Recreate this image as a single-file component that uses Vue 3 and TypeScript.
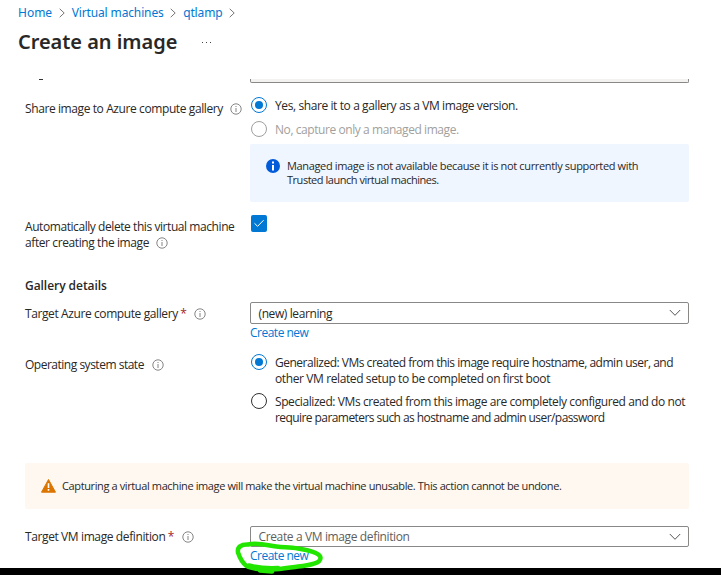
<script setup lang="ts">
import { ref } from 'vue'

const crumbs = [
  { text: 'Home', cls: 'c-home' },
  { text: 'Virtual machines', cls: 'c-vm' },
  { text: 'qtlamp', cls: 'c-name' },
]
const share = ref('gallery')
const osState = ref('generalized')
const autoDelete = ref(true)
</script>

<template>
  <div class="page">
    <header class="header">
      <nav class="crumbs">
        <template v-for="c in crumbs" :key="c.text">
          <a :class="c.cls">{{ c.text }}</a>
          <svg class="sep" width="6" height="10" viewBox="0 0 6 10"><path d="M.7 .8 5.2 5 .7 9.2" /></svg>
        </template>
      </nav>
      <div class="title-row">
        <h1>Create an image</h1>
        <span class="dots"><i></i><i></i><i></i></span>
      </div>
    </header>

    <main class="form">
      <div class="clipped"><span class="descender"></span><span class="clipped-field"></span></div>

      <section class="row share">
        <div class="label"><span class="t-share">Share image to Azure compute gallery</span>
          <svg class="info" viewBox="0 0 12 12"><circle cx="6" cy="6" r="5.2" /><path d="M6 5v4M6 3v1" /></svg>
        </div>
        <div class="options">
          <div class="option" @click="share = 'gallery'">
            <span class="radio" :class="{ on: share === 'gallery' }"></span>
            <span class="t-yes">Yes, share it to a gallery as a VM image version.</span>
          </div>
          <div class="option disabled">
            <span class="radio"></span>
            <span class="t-no">No, capture only a managed image.</span>
          </div>
          <div class="notice">
            <svg width="14" height="14" viewBox="0 0 14 14"><circle cx="7" cy="7" r="7" fill="#015cda" /><path d="M6 6h2v5.5H6zM6 2.6h2v2H6z" fill="#fff" /></svg>
            <p><span class="t-n1">Managed image is not available because it is not currently supported with</span><br><span class="t-n2">Trusted launch virtual machines.</span></p>
          </div>
        </div>
      </section>

      <section class="row delete">
        <div class="label two"><span class="t-d1">Automatically delete this virtual machine</span><br><span class="t-d2">after creating the image</span>
          <svg class="info" viewBox="0 0 12 12"><circle cx="6" cy="6" r="5.2" /><path d="M6 5v4M6 3v1" /></svg>
        </div>
        <div class="check" @click="autoDelete = !autoDelete">
          <svg v-if="autoDelete" width="16" height="17" viewBox="0 0 16 17"><path d="M3.5 8.3 6.6 11.3 12.6 5.2" /></svg>
        </div>
      </section>

      <h2>Gallery details</h2>

      <section class="row gallery">
        <div class="label"><span class="t-target">Target Azure compute gallery</span><b class="req">*</b>
          <svg class="info" viewBox="0 0 12 12"><circle cx="6" cy="6" r="5.2" /><path d="M6 5v4M6 3v1" /></svg>
        </div>
        <div>
          <div class="select"><span class="t-learn">(new) learning</span>
            <svg width="12" height="8" viewBox="0 0 12 8"><path d="M.8 1 6 6.3 11.2 1" /></svg>
          </div>
          <a class="create">Create new</a>
        </div>
      </section>

      <section class="row os">
        <div class="label"><span class="t-os">Operating system state</span>
          <svg class="info" viewBox="0 0 12 12"><circle cx="6" cy="6" r="5.2" /><path d="M6 5v4M6 3v1" /></svg>
        </div>
        <div class="options">
          <div class="option" @click="osState = 'generalized'">
            <span class="radio" :class="{ on: osState === 'generalized' }"></span>
            <span><span class="t-g1">Generalized: VMs created from this image require hostname, admin user, and</span><br><span class="t-g2">other VM related setup to be completed on first boot</span></span>
          </div>
          <div class="option" @click="osState = 'specialized'">
            <span class="radio" :class="{ on: osState === 'specialized' }"></span>
            <span><span class="t-s1">Specialized: VMs created from this image are completely configured and do not</span><br><span class="t-s2">require parameters such as hostname and admin user/password</span></span>
          </div>
        </div>
      </section>

      <div class="warning">
        <svg width="15" height="14" viewBox="0 0 15 14"><path d="M7.5 .5 14.5 13.2H.5z" fill="#db7500" stroke="#db7500" stroke-linejoin="round" /><path d="M6.7 4.3h1.6v4.6H6.7zM6.7 10.1h1.6v1.6H6.7z" fill="#fff" /></svg>
        <span class="t-w">Capturing a virtual machine image will make the virtual machine unusable. This action cannot be undone.</span>
      </div>

      <section class="row definition">
        <div class="label"><span class="t-def">Target VM image definition</span><b class="req">*</b>
          <svg class="info" viewBox="0 0 12 12"><circle cx="6" cy="6" r="5.2" /><path d="M6 5v4M6 3v1" /></svg>
        </div>
        <div>
          <div class="select placeholder"><span class="t-ph">Create a VM image definition</span>
            <svg width="12" height="8" viewBox="0 0 12 8"><path d="M.8 1 6 6.3 11.2 1" /></svg>
          </div>
          <a class="create">Create new</a>
        </div>
      </section>
    </main>

    <footer class="bar"></footer>

    <svg class="marker" width="100" height="40" viewBox="0 0 100 40">
      <path d="M14 9.5C19 8.300 28 9 36 10.500 45 12.500 54 12 64 13.500 74 15 86 18 86.500 22.500 87 28 76 30.500 64 31.500 56 32.500 46 34.500 38 34.500 27 34.500 17 34 12.500 31 8 27.500 5.500 22 4 17.500 3 12 7 9.300 14 9.500" />
      <path d="M15 30.500C24 33 32 33.500 44 33" />
      <path d="M26 35.500 38 36.500" />
    </svg>
  </div>
</template>

<style>
body { margin: 0; background: #fff; }
</style>

<style scoped>
.page {
  position: relative;
  width: 721px;
  height: 575px;
  overflow: hidden;
  background: #fff;
  color: #292827;
  font: 12px/16px "Open Sans", "Noto Sans", sans-serif;
  letter-spacing: -.4px;
  white-space: nowrap;
  display: flex;
  flex-direction: column;
}
.page * { box-sizing: border-box; }
a { color: #0078d4; }
.header { height: 79px; flex: none; padding-left: 18px; }
.crumbs { display: flex; align-items: center; height: 26px; font-family: "Noto Sans", sans-serif; font-size: 12px; letter-spacing: -.13px; }
.c-home { letter-spacing: 0; }
.sep { margin: 0 7px 0 6.5px; fill: none; stroke: #777; }
.title-row { display: flex; align-items: center; height: 31px; }
h1 { margin: 0; font-family: "Noto Sans", sans-serif; font-size: 20px; line-height: 28px; font-weight: 600; letter-spacing: -.04px; width: 184px; }
.dots { display: flex; gap: 3px; padding-top: 1px; }
.dots i { width: 1px; height: 1px; background: #444; }
.form { flex: none; height: 489px; width: 689px; padding-left: 25px; }
.clipped { display: grid; grid-template-columns: 225px 439px; height: 4px; }
.descender { width: 4px; height: 1px; margin-left: 14px; background: #333; }
.clipped-field { border: 1px solid #8a8886; border-top: 0; border-radius: 0 0 2px 2px; background: #f3f2f1; }
.row { display: grid; grid-template-columns: 225px 439px; }
.label { display: flex; align-items: center; height: 16px; }
.label.two { display: block; height: 32px; }
.info { width: 12px; height: 12px; flex: none; margin-left: 7.5px; fill: none; stroke: #777; stroke-width: .9; }
.two .info { margin-left: 7px; vertical-align: -2px; }
.os .info { margin-left: 8.5px; }
.req { color: #a4262c; font-weight: 400; margin-left: 2.5px; width: 6px; }
.req + .info { margin-left: 8px; }
.option { display: flex; align-items: flex-start; gap: 8px; }
.radio { width: 16px; height: 16px; flex: none; margin-left: 1px; border: 1px solid #323130; border-radius: 50%; display: grid; place-items: center; }
.radio.on { border-color: #0078d4; }
.radio.on::after { content: ""; width: 8px; height: 8px; border-radius: 50%; background: #0078d4; }
.disabled { color: #a19f9d; }
.disabled .radio { border-color: #a19f9d; }
.share { margin-top: 14px; }
.share .label { margin-top: 4px; }
.t-share, .t-yes { letter-spacing: -.4px; }
.t-no { letter-spacing: -.43px; }
.share .option { height: 16px; }
.share .option + .option { margin-top: 8px; }
.t-yes, .t-no { padding-top: 1px; }
.notice { display: flex; gap: 7px; width: 439px; height: 58px; margin-top: 7px; padding: 15px 16px; background: #f0f6ff; border-radius: 2px; font-size: 11px; line-height: 14px; }
.notice p { margin: 0; }
.t-n1 { letter-spacing: -.35px; }
.t-n2 { letter-spacing: -.47px; }
.delete { margin-top: 13px; }
.delete .label { margin-top: 4px; }
.t-d1 { letter-spacing: -.43px; }
.check { width: 16px; height: 17px; margin-left: 1px; background: #0078d4; border-radius: 2px; }
.check svg { display: block; fill: none; stroke: #fff; }
h2 { margin: 27px 0 0; font-size: 12px; line-height: 16px; font-weight: 600; letter-spacing: -.05px; }
.gallery { margin-top: 8px; }
.gallery .label { margin-top: 4px; }
.select { display: flex; align-items: center; justify-content: space-between; height: 22px; padding: 0 7px 0 7.5px; border: 1px solid #8a8886; border-radius: 2px; }
.select span { padding-top: 2px; }
.select svg { fill: none; stroke: #555; }
.placeholder { color: #605e5c; height: 21px; }
.placeholder span { padding-top: 0; }
.t-ph { letter-spacing: -.37px; }
.create { display: block; margin-top: 1px; height: 16px; letter-spacing: -.5px; }
.os { margin-top: 13px; }
.os .label { margin-top: 3px; }
.t-os { letter-spacing: -.49px; }
.os .option { margin-top: 1px; }
.os .option + .option { margin-top: 7px; }
.os .radio { margin-top: -1px; }
.t-g1 { letter-spacing: -.49px; }
.t-g2 { letter-spacing: -.39px; }
.t-s1 { letter-spacing: -.41px; }
.t-s2 { letter-spacing: -.57px; }
.warning { display: flex; align-items: center; gap: 6px; height: 46px; margin-top: 37px; padding-left: 16px; background: #fff8f1; border-radius: 2px; font-size: 11px; letter-spacing: -.38px; }
.definition { margin-top: 17px; }
.definition .label { margin-top: 3px; }
.t-def { letter-spacing: -.39px; }
.bar { height: 7px; flex: none; background: #000; }
.marker { position: absolute; left: 234px; top: 535px; fill: none; stroke: #23e600; stroke-width: 4.500; stroke-linecap: round; stroke-linejoin: round; }
</style>
